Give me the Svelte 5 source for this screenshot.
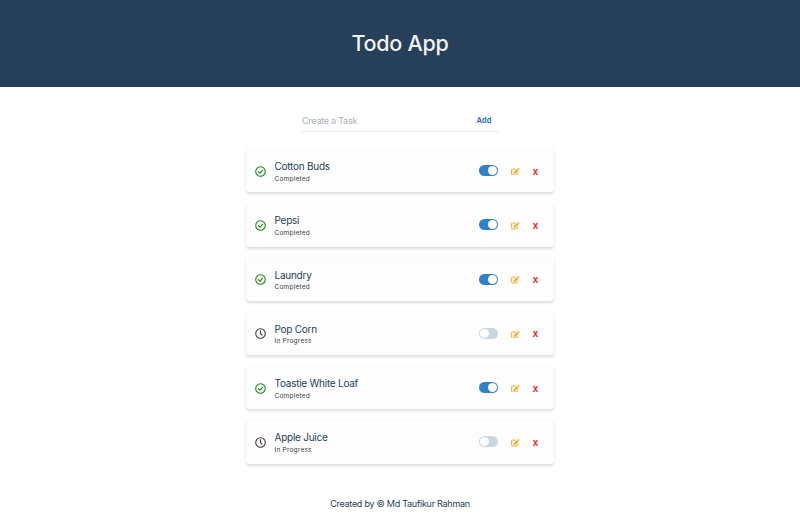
<script>
  let tasks = $state([
    { name: 'Cotton Buds', done: true },
    { name: 'Pepsi', done: true },
    { name: 'Laundry', done: true },
    { name: 'Pop Corn', done: false },
    { name: 'Toastie White Loaf', done: true },
    { name: 'Apple Juice', done: false }
  ]);
  let draft = $state('');

  function add(event) {
    event.preventDefault();
    if (!draft.trim()) return;
    tasks.push({ name: draft.trim(), done: false });
    draft = '';
  }
</script>

<div class="app">
  <header><h1>Todo App</h1></header>

  <form onsubmit={add}>
    <input placeholder="Create a Task" bind:value={draft} />
    <button class="add">Add</button>
  </form>

  <main>
    {#each tasks as task, i}
      <article class="card">
        {#if task.done}
          <svg class="status done" viewBox="0 0 24 24">
            <circle cx="12" cy="12" r="10.4" />
            <path d="M7.2 12.2l3.5 3.5 6.2-6.8" />
          </svg>
        {:else}
          <svg class="status pending" viewBox="0 0 24 24">
            <circle cx="12" cy="12" r="10.4" />
            <path d="M12 6v6.5l3.3 3.3" />
          </svg>
        {/if}
        <div class="text">
          <div class="name">{task.name}</div>
          <div class="state">{task.done ? 'Completed' : 'In Progress'}</div>
        </div>
        <button
          class="switch"
          class:on={task.done}
          aria-label="Toggle task"
          onclick={() => (task.done = !task.done)}
        ><span class="knob"></span></button>
        <button class="edit" aria-label="Edit task">
          <svg viewBox="0 0 24 21">
            <path class="box" d="M14 3.2H3.6A2 2 0 0 0 1.6 5.2v12.2a2 2 0 0 0 2 2h12.2a2 2 0 0 0 2-2V13" />
            <path class="pen" d="M17.2 2.8l4 4-9.4 9.4-4.6.6.6-4.6zM18.2 1.8l1-1a1.8 1.8 0 0 1 2.5 0l1.5 1.5a1.8 1.8 0 0 1 0 2.5l-1 1z" />
          </svg>
        </button>
        <button class="remove" aria-label="Delete task" onclick={() => tasks.splice(i, 1)}>X</button>
      </article>
    {/each}
  </main>

  <footer>Created by © Md Taufikur Rahman</footer>
</div>

<style>
  :global(body) {
    background: #fff;
  }
  .app {
    display: flex;
    flex-direction: column;
    align-items: center;
    height: 520px;
    font-family: Inter, 'Liberation Sans', sans-serif;
    color: #243e59;
  }
  header {
    display: flex;
    align-items: center;
    justify-content: center;
    box-sizing: border-box;
    width: 100%;
    height: 86.5px;
    background: #263f5a;
  }
  h1 {
    margin: 0;
    font-size: 21.5px;
    font-weight: 500;
    line-height: 30px;
    letter-spacing: -0.25px;
    color: #f4f3ee;
  }
  button {
    display: flex;
    align-items: center;
    justify-content: center;
    padding: 0;
    border: 0;
    background: none;
    font-family: inherit;
    cursor: pointer;
  }
  form {
    display: flex;
    box-sizing: border-box;
    width: 196px;
    height: 22px;
    margin-top: 23px;
    border-bottom: 1px solid #e6ebf0;
  }
  input {
    flex: 1;
    min-width: 0;
    padding: 0;
    border: 0;
    outline: 0;
    background: none;
    font: 9px Inter, sans-serif;
    letter-spacing: -0.25px;
    color: #243e59;
  }
  input::placeholder {
    color: #a3afbd;
    opacity: 1;
  }
  .add {
    width: 28px;
    font-size: 7.5px;
    font-weight: 700;
    color: #3478bd;
  }
  main {
    display: flex;
    flex-direction: column;
    gap: 10.85px;
    width: 308px;
    margin-top: 17.5px;
  }
  .card {
    display: flex;
    align-items: center;
    box-sizing: border-box;
    height: 43.4px;
    padding: 0 14px 0 9px;
    border-radius: 4px;
    background: #fdfdfd;
    box-shadow: 0 1.5px 3px rgba(0, 0, 0, 0.14);
  }
  .status {
    width: 11px;
    height: 11px;
    margin-top: 1px;
    fill: none;
    stroke-width: 2.3;
    stroke-linecap: round;
    stroke-linejoin: round;
  }
  .done {
    stroke: #128512;
  }
  .pending {
    stroke: #49303d;
  }
  .text {
    flex: 1;
    margin-left: 8.5px;
    padding-top: 1.4px;
  }
  .name {
    font-size: 10px;
    line-height: 14px;
    letter-spacing: -0.25px;
  }
  .state {
    padding-top: 0.6px;
    font-size: 6.5px;
    line-height: 10px;
    letter-spacing: 0.22px;
    color: #414141;
  }
  .switch {
    box-sizing: border-box;
    justify-content: flex-start;
    width: 19px;
    height: 11px;
    padding: 1px;
    border-radius: 6px;
    background: #cbd5e0;
  }
  .switch.on {
    justify-content: flex-end;
    background: #3180ce;
  }
  .knob {
    width: 9px;
    height: 9px;
    border-radius: 50%;
    background: #fff;
  }
  .edit {
    margin: 2px 0 0 13px;
  }
  .edit svg {
    width: 8.6px;
    height: 7.5px;
  }
  .box {
    fill: none;
    stroke: #f6a81c;
    stroke-width: 2.6;
  }
  .pen {
    fill: #f6a81c;
  }
  .remove {
    width: 9px;
    margin: 2px 0 0 11.4px;
    font-size: 8px;
    font-weight: 700;
    color: #e51e1e;
  }
  footer {
    margin-top: 33.5px;
    font-size: 9px;
    line-height: 14px;
    letter-spacing: -0.26px;
  }
</style>
